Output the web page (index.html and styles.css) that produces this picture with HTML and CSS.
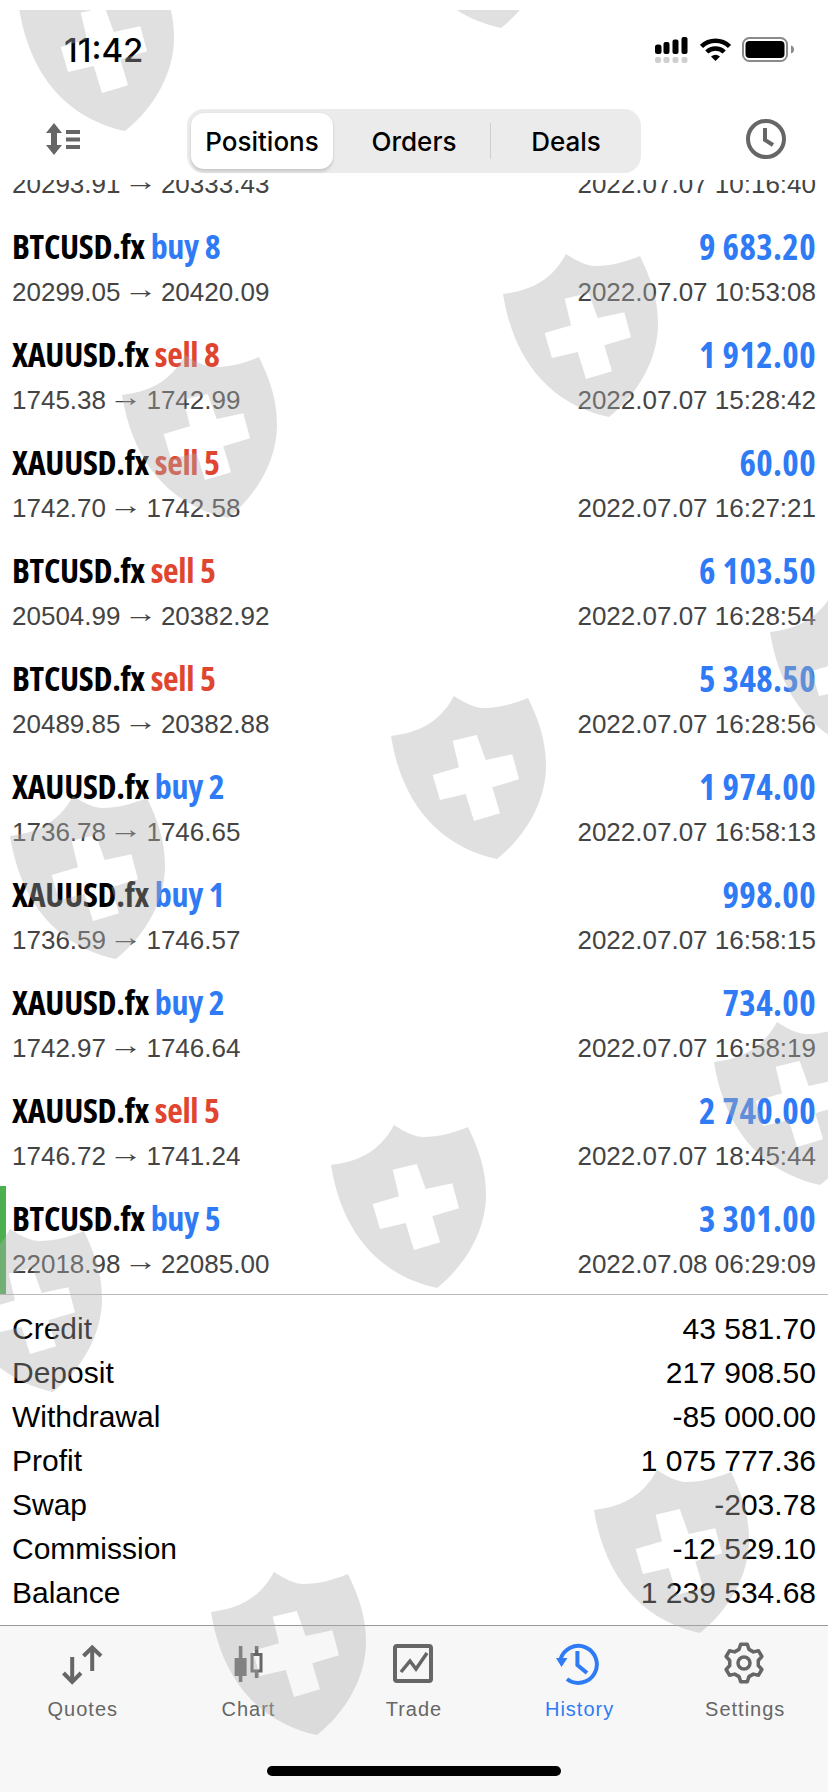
FILE: index.html
```html
<!DOCTYPE html>
<html lang="en">
<head>
<meta charset="utf-8">
<title>History</title>
<link rel="stylesheet" href="styles.css">
</head>
<body>
<div class="page">
  <header class="status">
    <span class="time">11:42</span>
    <div class="status-icons">
      <svg class="ic-signal" width="33" height="26" viewBox="0 0 33 26"><g fill="#000"><rect x="0" y="7.5" width="6.5" height="9.5" rx="2.5"/><rect x="8.5" y="5" width="6" height="12" rx="2"/><rect x="17.5" y="2.5" width="6" height="14.5" rx="2"/><rect x="26.5" y="0" width="6" height="17" rx="2"/></g><g fill="#cfcfcf"><rect x="0" y="20" width="6" height="6" rx="2"/><rect x="8.5" y="20" width="6" height="6" rx="2"/><rect x="17.5" y="20" width="6" height="6" rx="2"/><rect x="26.5" y="20" width="6" height="6" rx="2"/></g></svg>
      <svg class="ic-wifi" width="31" height="24" viewBox="0 0 31 24"><g fill="none" stroke="#000" stroke-width="4.5"><path d="M1.5 9.5A20 20 0 0 1 29.5 9.5"/><path d="M6.8 15A12.5 12.5 0 0 1 24.2 15"/></g><path d="M11 19.5Q15.5 16 20 19.5L15.5 24Z" fill="#000"/></svg>
      <svg class="ic-battery" width="52" height="25" viewBox="0 0 52 25"><rect x="1" y="1" width="44" height="23" rx="6.5" fill="none" stroke="#8a8a8a" stroke-width="2"/><rect x="3.5" y="4" width="39" height="17" rx="4" fill="#000"/><path d="M49 8.5c2 .5 3 2 3 4s-1 3.500-3 4z" fill="#8a8a8a"/></svg>
    </div>
  </header>

  <nav class="toolbar">
    <svg class="ic-sort" width="36" height="32" viewBox="0 0 36 32"><g fill="#666"><path d="M8 0L16 10H11V22H16L8 32L0 22H5V10H0Z"/><rect x="20" y="7" width="14" height="4"/><rect x="20" y="14.500" width="14" height="4"/><rect x="20" y="22" width="14" height="4"/></g></svg>
    <div class="segment">
      <span class="seg seg-positions">Positions</span>
      <span class="seg seg-orders">Orders</span>
      <span class="seg-sep"></span>
      <span class="seg seg-deals">Deals</span>
    </div>
    <svg class="ic-clock" width="44" height="44" viewBox="0 0 44 44"><circle cx="22" cy="22" r="18" fill="none" stroke="#666" stroke-width="4"/><path d="M21 11V23L29 28" fill="none" stroke="#666" stroke-width="4"/></svg>
  </nav>

  <main class="list">
    <div class="row"><div class="line"><span class="title"></span><span class="amount"></span></div><div class="line sub"><span>20293.91 <i class="arrow">→</i> 20333.43</span><span>2022.07.07 10:16:40</span></div></div>
    <div class="row"><div class="line"><span class="title">BTCUSD.fx <b class="buy">buy 8</b></span><span class="amount">9 683.20</span></div><div class="line sub"><span>20299.05 <i class="arrow">→</i> 20420.09</span><span>2022.07.07 10:53:08</span></div></div>
    <div class="row"><div class="line"><span class="title">XAUUSD.fx <b class="sell">sell 8</b></span><span class="amount">1 912.00</span></div><div class="line sub"><span>1745.38 <i class="arrow">→</i> 1742.99</span><span>2022.07.07 15:28:42</span></div></div>
    <div class="row"><div class="line"><span class="title">XAUUSD.fx <b class="sell">sell 5</b></span><span class="amount">60.00</span></div><div class="line sub"><span>1742.70 <i class="arrow">→</i> 1742.58</span><span>2022.07.07 16:27:21</span></div></div>
    <div class="row"><div class="line"><span class="title">BTCUSD.fx <b class="sell">sell 5</b></span><span class="amount">6 103.50</span></div><div class="line sub"><span>20504.99 <i class="arrow">→</i> 20382.92</span><span>2022.07.07 16:28:54</span></div></div>
    <div class="row"><div class="line"><span class="title">BTCUSD.fx <b class="sell">sell 5</b></span><span class="amount">5 348.50</span></div><div class="line sub"><span>20489.85 <i class="arrow">→</i> 20382.88</span><span>2022.07.07 16:28:56</span></div></div>
    <div class="row"><div class="line"><span class="title">XAUUSD.fx <b class="buy">buy 2</b></span><span class="amount">1 974.00</span></div><div class="line sub"><span>1736.78 <i class="arrow">→</i> 1746.65</span><span>2022.07.07 16:58:13</span></div></div>
    <div class="row"><div class="line"><span class="title">XAUUSD.fx <b class="buy">buy 1</b></span><span class="amount">998.00</span></div><div class="line sub"><span>1736.59 <i class="arrow">→</i> 1746.57</span><span>2022.07.07 16:58:15</span></div></div>
    <div class="row"><div class="line"><span class="title">XAUUSD.fx <b class="buy">buy 2</b></span><span class="amount">734.00</span></div><div class="line sub"><span>1742.97 <i class="arrow">→</i> 1746.64</span><span>2022.07.07 16:58:19</span></div></div>
    <div class="row"><div class="line"><span class="title">XAUUSD.fx <b class="sell">sell 5</b></span><span class="amount">2 740.00</span></div><div class="line sub"><span>1746.72 <i class="arrow">→</i> 1741.24</span><span>2022.07.07 18:45:44</span></div></div>
    <div class="row row-active"><div class="line"><span class="title">BTCUSD.fx <b class="buy">buy 5</b></span><span class="amount">3 301.00</span></div><div class="line sub"><span>22018.98 <i class="arrow">→</i> 22085.00</span><span>2022.07.08 06:29:09</span></div></div>
  </main>

  <section class="stats">
    <div class="stat"><span>Credit</span><span>43 581.70</span></div>
    <div class="stat"><span>Deposit</span><span>217 908.50</span></div>
    <div class="stat"><span>Withdrawal</span><span>-85 000.00</span></div>
    <div class="stat"><span>Profit</span><span>1 075 777.36</span></div>
    <div class="stat"><span>Swap</span><span>-203.78</span></div>
    <div class="stat"><span>Commission</span><span>-12 529.10</span></div>
    <div class="stat"><span>Balance</span><span>1 239 534.68</span></div>
  </section>

  <footer class="tabbar">
    <div class="tabs">
      <div class="tab">
        <svg width="48" height="44" viewBox="0 0 48 44"><g fill="none" stroke="#666" stroke-width="4"><path d="M13.200 15V39"/><path d="M4.500 31L13.200 40L22 31"/><path d="M33.200 6V29"/><path d="M24.500 14L33.200 5.500L42 14"/></g></svg>
        <span class="tab-label">Quotes</span>
      </div>
      <div class="tab">
        <svg width="48" height="44" viewBox="0 0 48 44"><g fill="#666"><rect x="14.800" y="4" width="3.600" height="36"/><rect x="10.600" y="16" width="12" height="18"/><rect x="30.800" y="4" width="3.600" height="7"/><rect x="30.800" y="30" width="3.600" height="6"/></g><rect x="28" y="12.500" width="9" height="16.500" fill="none" stroke="#666" stroke-width="3"/></svg>
        <span class="tab-label">Chart</span>
      </div>
      <div class="tab">
        <svg width="48" height="44" viewBox="0 0 48 44"><rect x="5" y="4" width="36" height="35" rx="2" fill="none" stroke="#666" stroke-width="4"/><path d="M11 30L20 19L26 27L37 11" fill="none" stroke="#666" stroke-width="3.500"/></svg>
        <span class="tab-label">Trade</span>
      </div>
      <div class="tab tab-active">
        <svg width="48" height="44" viewBox="0 0 48 44"><g fill="none" stroke="#2f7bf6" stroke-width="4"><path d="M4.500 17.500A18.500 18.500 0 1 1 11 37"/><path d="M21.400 9V23L31 31"/></g><path d="M0 16H11.500L5.500 25Z" fill="#2f7bf6"/></svg>
        <span class="tab-label">History</span>
      </div>
      <div class="tab">
        <svg width="48" height="44" viewBox="0 0 48 44"><path d="M18.040 7.370L19.700 2.290H26.300L27.960 7.370L32.320 9.890L37.550 8.790L40.850 14.500L37.280 18.480V23.520L40.850 27.500L37.550 33.210L32.320 32.110L27.960 34.630L26.300 39.710H19.700L18.040 34.630L13.680 32.110L8.450 33.210L5.150 27.500L8.720 23.520V18.480L5.150 14.500L8.450 8.790L13.680 9.890Z" fill="none" stroke="#666" stroke-width="3.500" stroke-linejoin="round"/><circle cx="23" cy="21" r="6" fill="none" stroke="#666" stroke-width="3.500"/></svg>
        <span class="tab-label">Settings</span>
      </div>
    </div>
    <div class="home-bar"></div>
  </footer>

  <svg class="watermark" width="828" height="1782" viewBox="0 10 828 1782">
    <defs>
      <path id="shield" fill-rule="evenodd" d="M0 40C25 37 48 28 63 0C75 8 85 12 92 12C108 12 122 8 137 2C148 25 155 45 155 70C155 105 135 140 106 163C55 152 12 115 0 40ZM61.700 44.700L85.700 39L94.700 64L121.300 58.300L128 83.300L101.300 91.300L109 117.300L83 125L74.700 98L49 104L41.700 79L68 71.300Z"/>
    </defs>
    <g class="wm-shapes">
      <use href="#shield" x="19" y="-32"/>
      <use href="#shield" x="395" y="-135"/>
      <use href="#shield" x="503" y="254"/>
      <use href="#shield" x="122" y="355"/>
      <use href="#shield" x="770" y="592"/>
      <use href="#shield" x="391" y="696"/>
      <use href="#shield" x="10" y="796"/>
      <use href="#shield" x="714" y="1022"/>
      <use href="#shield" x="331" y="1125"/>
      <use href="#shield" x="-53" y="1229"/>
      <use href="#shield" x="594" y="1470"/>
      <use href="#shield" x="211" y="1572"/>
    </g>
  </svg>
</div>
</body>
</html>
```

FILE: styles.css
```css
* { box-sizing: border-box; }
html, body { margin: 0; padding: 0; background: #fff; }
.page {
  position: relative;
  width: 828px;
  height: 1792px;
  overflow: hidden;
  display: flex;
  flex-direction: column;
  font-family: "Liberation Sans", Arial, sans-serif;
  color: #000;
}
.status {
  height: 100px;
  flex: none;
  display: flex;
  justify-content: space-between;
  padding: 36px 34px 0 64px;
}
.time {
  font-family: Inter, "Liberation Sans", sans-serif;
  font-size: 33px;
  font-weight: 500;
  line-height: 28px;
}
.status-icons { display: flex; align-items: flex-start; height: 26px; margin-top: 1px; }
.ic-signal { margin-right: 12px; }
.ic-wifi { margin-right: 11px; }
.toolbar {
  height: 80px;
  flex: none;
  display: flex;
  align-items: flex-start;
  padding: 9px 0 0 46px;
}
.ic-sort { margin: 14px 105px 0 0; flex: none; }
.ic-clock { margin: 8px 0 0 103px; flex: none; }
.segment {
  width: 454px;
  height: 64px;
  flex: none;
  display: flex;
  align-items: center;
  padding: 4px;
  border-radius: 17px;
  background: #ebebeb;
}
.seg {
  height: 56px;
  display: flex;
  align-items: center;
  justify-content: center;
  font-family: Inter, "Liberation Sans", sans-serif;
  font-size: 26px;
  font-weight: 500;
}
.seg-positions {
  width: 142px;
  background: #fff;
  border-radius: 13px;
  box-shadow: 0 3px 3px rgba(0,0,0,.12), 0 0 2px rgba(0,0,0,.08);
}
.seg-orders { width: 157px; padding-left: 5px; }
.seg-sep { width: 1px; height: 36px; background: #cfcfcf; flex: none; }
.seg-deals { flex: 1; padding-left: 4px; }
.list {
  height: 1114px;
  flex: none;
  overflow: hidden;
  display: flex;
  flex-direction: column;
  justify-content: flex-end;
}
.row {
  height: 108px;
  flex: none;
  padding: 14px 12px 0 12px;
}
.row-active { box-shadow: inset 6px 0 0 #4caf50; }
.line { display: flex; justify-content: space-between; height: 36px; align-items: center; }
.title, .amount {
  font-family: "Open Sans", sans-serif;
  font-size: 34px;
  font-weight: 700;
  font-stretch: 75%;
}
.title { letter-spacing: -.3px; }
.amount { color: #2f7bf6; font-size: 35px; letter-spacing: .4px; }
.title b { font-weight: 700; }
.buy { color: #2f7bf6; }
.sell { color: #e0452f; }
.sub {
  margin-top: 10px;
  font-size: 26px;
  color: #444;
}
.arrow {
  display: inline-block;
  width: 26px;
  text-align: center;
  font-style: normal;
  transform: translateY(-3px) scaleX(1.3);
}
.stats {
  height: 331px;
  flex: none;
  padding: 12px 12px 0 12px;
  border-top: 1px solid #bbb;
}
.stat {
  display: flex;
  justify-content: space-between;
  align-items: center;
  height: 44px;
  font-size: 30px;
}
.tabbar {
  flex: 1;
  background: #f7f7f7;
  border-top: 1px solid #999;
  display: flex;
  flex-direction: column;
  align-items: center;
}
.tabs { display: grid; grid-template-columns: repeat(5, 1fr); width: 100%; padding-top: 16px; }
.tab { display: flex; flex-direction: column; align-items: center; color: #666; }
.tab-label { font-size: 20px; letter-spacing: 1px; line-height: 24px; margin-top: 11px; }
.tab-active { color: #2f7bf6; }
.home-bar { width: 294px; height: 10px; margin-top: 45px; border-radius: 5px; background: #000; }
.watermark { position: absolute; left: 0; top: 10px; pointer-events: none; }
.wm-shapes { fill: rgba(174,174,174,.39); }
```
